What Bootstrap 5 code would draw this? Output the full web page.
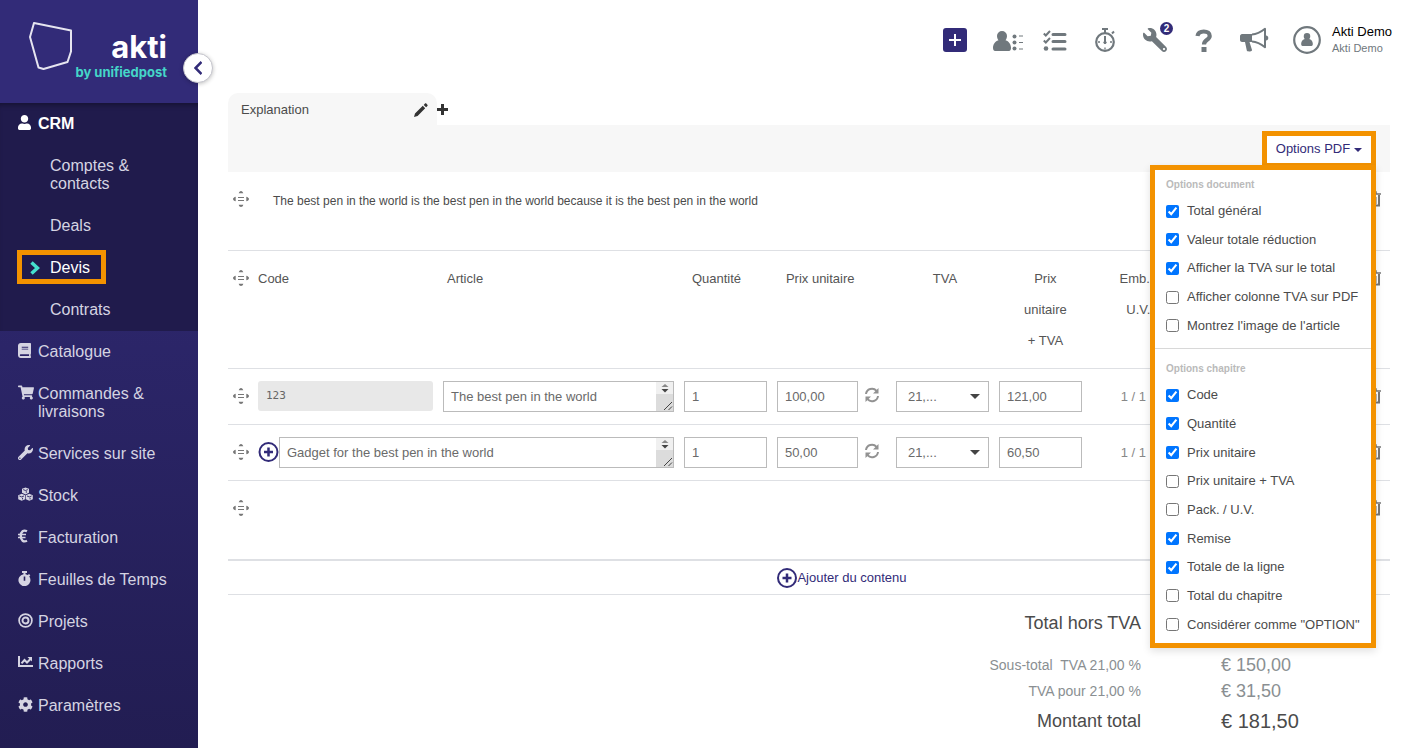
<!DOCTYPE html>
<html lang="fr">
<head>
<meta charset="utf-8">
<meta name="viewport" content="width=device-width, initial-scale=1">
<title>Akti – Devis</title>
<link href="https://cdn.jsdelivr.net/npm/bootstrap@5.3.0/dist/css/bootstrap.min.css" rel="stylesheet">
<style>
  :root { --brand: #322b78; --mark: #f39200; --ink: #4b4b4b; --line: #dee0e4; --icon: #70787d; }
  body { font-family: "Liberation Sans", Arial, sans-serif; font-size: 13px; line-height: 18px; color: var(--ink); background: #fff; }
  a { text-decoration: none; }
  svg { display: block; flex: none; }

  /* Sidebar */
  .sidebar { width: 198px; background: linear-gradient(#332c7b, #221d52); }
  .brand { height: 103px; background: #322b78; padding: 22px 31px 0 28px; }
  .brand-name { font: 700 31px/36px Inter, sans-serif; color: #fff; padding-top: 7px; }
  .brand-sub { font: 700 13px/14px Inter, sans-serif; color: #45d6c8; }
  .brand-text { margin-left: -26px; }
  .collapse-btn { top: 53px; right: -15px; width: 30px; height: 30px; border: 1px solid #c4c4cc; background: #fff; color: var(--brand); z-index: 5; box-shadow: 0 1px 4px rgba(0,0,0,.25); }
  .menu { font-size: 16px; line-height: 18px; }
  .menu a { color: #d5d4e2; display: flex; }
  .menu-main { padding: 12px 24px 12px 18px; }
  .menu-icon { width: 20px; flex: none; }
  .menu-sub { padding: 12px 40px 12px 50px; }
  .menu-open { background: #201b4c; box-shadow: inset 0 5px 5px -3px rgba(0,0,0,.35); }
  .menu .menu-active { color: #fff; }
  .marked-item { padding: 3px 17px 5px; }
  .marked-item a { width: 89px; height: 34px; border: 5px solid var(--mark); padding: 1px 0 0 8px; gap: 10px; align-items: center; }

  /* Header */
  .topbar { height: 93px; padding: 0 10px 14px 0; }
  .topbar a { color: var(--icon); }
  .topbar .add-btn { width: 24px; height: 24px; border-radius: 3px; background: var(--brand); color: #fff; margin-right: 26px; }
  .count { top: -6px; left: 17px; width: 13px; height: 13px; font-size: 10px; line-height: 13px; background: var(--brand); }
  .account { gap: 11px; }
  .user-name { color: #000; line-height: 17px; }
  .user-org { font-size: 11px; line-height: 16px; color: var(--icon); }

  /* Chapter */
  .content { padding: 0 12px 0 30px; }
  .tab { width: 209px; height: 32px; background: #f7f7f7; border-radius: 10px 10px 0 0; padding: 2px 9px 0 13px; }
  .icon-btn { border: 0; background: none; padding: 0; color: inherit; }
  .chapter-bar { height: 47px; background: #f7f7f7; }
  .pdf-options { top: 6px; right: 14px; z-index: 4; }
  .pdf-btn { width: 114px; height: 37px; background: #fff; border: 5px solid var(--mark); border-radius: 0; padding: 0 0 2px; font-size: 13px; color: var(--brand); }
  .pdf-btn::after { margin-left: 4px; vertical-align: 1px; border-top-width: 4px; border-left-width: 4px; border-right-width: 4px; }
  .pdf-menu { top: 34px; right: 0; width: 226px; border: 5px solid var(--mark); border-radius: 0; padding: 6px 0 4px; font-size: 13px; color: var(--ink); box-shadow: 0 3px 8px rgba(0,0,0,.12); }
  .pdf-menu h6 { font-size: 10px; line-height: 18px; font-weight: 700; color: #bababa; margin: 0; padding: 0 11px; }
  .pdf-menu ul { display: grid; grid-auto-rows: 1fr; padding: 0 11px; margin: 3px 0 0; list-style: none; }
  .list-document { height: 143px; }
  .list-chapter { height: 258px; }
  .pdf-menu label { display: flex; align-items: center; gap: 8px; height: 100%; white-space: nowrap; }
  .pdf-menu input { margin: 0; width: 13px; height: 13px; }
  .pdf-menu hr { margin: 8px 0 11px; border-color: #d8d8d8; opacity: 1; }

  /* Quote lines */
  .lines { table-layout: fixed; width: 100%; border-collapse: collapse; }
  .lines tr { border-bottom: 1px solid var(--line); }
  .lines td, .lines th { padding: 12px 10px 12px 0; vertical-align: top; font-weight: 400; }
  .lines .col-drag { padding: 19px 0 0 5px; color: #777; }
  .lines .col-trash { padding: 19px 0 0 6px; color: #777; }
  .row-text { height: 78px; }
  .lines .row-text .row-note { padding: 20px 0 0 15px; font-size: 12px; }
  .row-head { height: 118px; }
  .lines .row-head th { line-height: 31px; color: #555; }
  .row-head .head-price { padding-left: 9px; }
  .row-head .head-vat { padding-right: 5px; }
  .row-line { height: 56px; }
  .row-blank { height: 80px; }
  .lines .row-blank { border-bottom: 2px solid var(--line); }
  .field { width: 100%; height: 31px; border: 1px solid #bbb; border-radius: 0; padding: 0 7px; font-size: 13px; line-height: 29px; color: #6a6a6a; background-color: #fff; }
  .field-code { height: 30px; border: 0; border-radius: 3px; background: #e8e8e8; padding: 0 8px; font-family: "DejaVu Sans Mono", monospace; font-size: 11px; color: #666; }
  .field-area { border: 1px solid #bbb; height: 31px; }
  .field-area textarea { border: 0; height: 29px; resize: none; overflow: hidden; min-width: 0; outline: 0; }
  .price-group { gap: 6px; }
  .price-group button { padding-bottom: 2px; }
  .field-price { width: 81px; }
  .field-vat { padding: 0 24px 0 11px; appearance: none; background: #fff url("data:image/svg+xml,%3Csvg xmlns='http://www.w3.org/2000/svg' width='10' height='5'%3E%3Cpath d='M0 0h10L5 5z' fill='%23444'/%3E%3C/svg%3E") no-repeat right 8px center; }
  .add-row { height: 34px; border-bottom: 1px solid var(--line); padding-left: 66px; }
  .add-row button { color: var(--brand); }
  .lines .unit { line-height: 31px; color: #888; }

  /* Totals */
  .totals { margin-top: 11px; width: 600px; color: #8a8f92; }
  .totals td, .totals th { font-weight: 400; padding: 0; text-align: right; font-size: 14px; line-height: 26px; }
  .totals td { width: 249px; text-align: left; padding-left: 80px; font-size: 18px; }
  .totals .total-main th, .totals .total-main td { color: var(--ink); font-size: 18px; line-height: 34px; }
  .totals .total-last td { font-size: 20px; }
  .totals .total-first th { padding-bottom: 12px; }
</style>
</head>
<body>
<svg width="0" height="0" class="position-absolute" aria-hidden="true">
  <symbol id="i-drag" viewBox="0 0 16 16"><path d="M8 0c1 0 2 1 2.300 2.300H5.700C6 1 7 0 8 0zM8 16c1 0 2-1 2.300-2.300H5.700C6 15 7 16 8 16zM0 8c0-1 1.300-2 2.700-2.300v4.600C1.300 10 0 9 0 8zM16 8c0-1-1.300-2-2.700-2.300v4.600C14.700 10 16 9 16 8z" fill="currentColor"/><path d="M5 6.500h6M5 9.500h6" stroke="currentColor"/></symbol>
  <symbol id="i-trash" viewBox="0 0 15 16"><path d="M0 3h15M5 2.500V1h5v1.500" fill="none" stroke="currentColor" stroke-width="1.500"/><path d="M2.500 4v10.500h10.500V4M6 6v7M9.500 6v7" fill="none" stroke="currentColor" stroke-width="2"/></symbol>
  <symbol id="i-sync" viewBox="0 0 16 16"><path d="M2 7a6 6 0 0 1 10.500-3.200M14 9a6 6 0 0 1-10.500 3.200" fill="none" stroke="currentColor" stroke-width="2"/><path d="M14.500 1v5.500H9zM1.500 15V9.500H7z" fill="currentColor"/></symbol>
  <symbol id="i-circle-plus" viewBox="0 0 20 20"><circle cx="10" cy="10" r="9" fill="none" stroke="currentColor" stroke-width="2"/><path d="M10 5.500v9M5.500 10h9" stroke="currentColor" stroke-width="2.500"/></symbol>
  <symbol id="i-scroll" viewBox="0 0 17 29"><path fill="#f0f0f0" d="M0 0h17v12H0z"/><path fill="#dcdcdc" d="M0 12h17v17H0z"/><path d="M9 2l3.500 3h-7z" fill="#888"/><path d="M5.500 7h7L9 10.500z" fill="#444"/><path d="M8 28l8-8M12.500 28l3.500-3.500" stroke="#444"/></symbol>
  <symbol id="i-person" viewBox="0 0 18 20"><path d="M9 0a5 5 0 0 1 5 5c0 2-.8 3.300-1.500 4.300C16.500 10.500 18 14 18 17c0 2-1 3-2 3H2c-1 0-2-1-2-3 0-3 1.500-6.500 5.500-7.700C4.800 8.300 4 7 4 5a5 5 0 0 1 5-5z" fill="currentColor"/></symbol>
  <symbol id="i-wrench" viewBox="0 0 512 512"><path fill="currentColor" d="M507.730 109.100c-2.240-9.030-13.540-12.090-20.120-5.510l-74.360 74.360-67.880-11.310-11.310-67.880 74.360-74.360c6.620-6.620 3.430-17.900-5.660-20.160-47.380-11.740-99.550.91-136.580 37.930-39.640 39.640-50.550 97.100-34.050 147.200L18.740 402.760c-24.990 24.990-24.990 65.510 0 90.500 24.990 24.990 65.510 24.990 90.500 0l213.210-213.210c50.120 16.710 107.470 5.680 147.370-34.220 37.070-37.070 49.700-89.320 37.910-136.730zM64 472c-13.250 0-24-10.750-24-24 0-13.260 10.750-24 24-24s24 10.740 24 24c0 13.250-10.750 24-24 24z"/></symbol>
</svg>

<div class="d-flex min-vh-100">
  <aside class="sidebar position-relative flex-shrink-0">
    <a class="brand d-flex" href="#">
      <svg width="44" height="48" viewBox="0 0 44 48" fill="none" stroke="#e6e5f0" stroke-width="2" stroke-linejoin="round"><path d="M6 1l37 7.500v21l-3.500 10.500-24 7-5-1.500L2 15z"/></svg>
      <span class="brand-text d-flex flex-column align-items-end flex-grow-1"><span class="brand-name">akti</span><span class="brand-sub text-nowrap">by unifiedpost</span></span>
    </a>
    <button class="collapse-btn position-absolute rounded-circle p-0 d-flex align-items-center justify-content-center" aria-label="Réduire le menu">
      <svg width="8" height="14" viewBox="0 0 8 14" fill="none" stroke="currentColor" stroke-width="2.500"><path d="M7.500 1L1.500 7l6 6"/></svg>
    </button>
    <nav class="menu">
      <div class="menu-open">
        <a class="menu-main menu-active fw-bold" href="#"><span class="menu-icon"><svg width="13" height="15" viewBox="0 0 448 512"><path fill="currentColor" d="M224 256c70.700 0 128-57.300 128-128S294.700 0 224 0 96 57.300 96 128s57.300 128 128 128zm89.600 32h-16.700c-22.200 10.200-46.900 16-72.900 16s-50.600-5.800-72.900-16h-16.700C60.200 288 0 348.200 0 422.400V464c0 26.500 21.500 48 48 48h352c26.500 0 48-21.500 48-48v-41.600c0-74.200-60.200-134.400-134.400-134.400z"/></svg></span>CRM</a>
        <a class="menu-sub" href="#">Comptes &amp; contacts</a>
        <a class="menu-sub" href="#">Deals</a>
        <div class="marked-item"><a class="menu-active" href="#"><svg width="10" height="14" viewBox="0 0 10 14" fill="none" stroke="#45e0cf" stroke-width="3.500"><path d="M1.500 1.500L7.500 7l-6 5.500"/></svg>Devis</a></div>
        <a class="menu-sub" href="#">Contrats</a>
      </div>
      <a class="menu-main" href="#"><span class="menu-icon"><svg width="13" height="15" viewBox="0 0 448 512"><path fill="currentColor" d="M448 360V24c0-13.300-10.700-24-24-24H96C43 0 0 43 0 96v320c0 53 43 96 96 96h328c13.300 0 24-10.700 24-24v-16c0-7.500-3.500-14.300-8.900-18.700-4.200-15.400-4.200-59.300 0-74.700 5.400-4.300 8.900-11.100 8.900-18.600zM128 134c0-3.300 2.700-6 6-6h212c3.300 0 6 2.700 6 6v20c0 3.300-2.700 6-6 6H134c-3.300 0-6-2.700-6-6v-20zm0 64c0-3.300 2.700-6 6-6h212c3.300 0 6 2.700 6 6v20c0 3.300-2.700 6-6 6H134c-3.300 0-6-2.700-6-6v-20zm253.400 250H96c-17.700 0-32-14.300-32-32 0-17.600 14.400-32 32-32h285.400c-1.900 17.100-1.900 46.900 0 64z"/></svg></span>Catalogue</a>
      <a class="menu-main" href="#"><span class="menu-icon"><svg width="16" height="15" viewBox="0 0 576 512"><path fill="currentColor" d="M528.120 301.319l47.273-208C578.806 78.301 567.391 64 551.990 64H159.208l-9.166-44.810C147.758 8.021 137.930 0 126.529 0H24C10.745 0 0 10.745 0 24v16c0 13.255 10.745 24 24 24h69.883l70.248 343.435C147.325 417.100 136 435.222 136 456c0 30.928 25.072 56 56 56s56-25.072 56-56c0-15.674-6.447-29.835-16.824-40h209.647C430.447 426.165 424 440.326 424 456c0 30.928 25.072 56 56 56s56-25.072 56-56c0-22.172-12.888-41.332-31.579-50.405l5.517-24.276c3.413-15.018-8.002-29.319-23.403-29.319H218.117l-6.545-32h293.145c11.206 0 20.920-7.754 23.403-18.681z"/></svg></span>Commandes &amp; livraisons</a>
      <a class="menu-main" href="#"><span class="menu-icon"><svg width="15" height="15"><use href="#i-wrench"/></svg></span>Services sur site</a>
      <a class="menu-main" href="#"><span class="menu-icon"><svg width="15" height="15" viewBox="0 0 15 15"><g fill="currentColor"><path d="M7.500 .5l3.500 1.300v4L7.500 7.400 4 5.800V1.800z"/><path d="M3.700 6.800l3.500 1.400v4l-3.500 1.500L.2 12.200V8.200z"/><path d="M11.300 6.800l3.500 1.400v4l-3.500 1.500-3.500-1.500V8.200z"/></g><path d="M5.200 2.600l2.300.9 2.300-.9M8.300 4.200v1.600M1.400 9l2.300.9L6 9M4.500 10.800v1.600M9 9l2.300.9 2.300-.9M12.100 10.800v1.600" fill="none" stroke="#2a245f" stroke-width=".9"/></svg></span>Stock</a>
      <a class="menu-main" href="#"><span class="menu-icon"><svg width="10" height="14" viewBox="0 0 10 14" fill="none" stroke="currentColor"><path d="M9 2.300C5.500.5 2.800 2.500 2.800 7S5.500 13.500 9 11.700" stroke-width="2.300"/><path d="M0 5.600h8M0 8.400h7.500" stroke-width="1.500"/></svg></span>Facturation</a>
      <a class="menu-main" href="#"><span class="menu-icon"><svg width="13" height="15" viewBox="0 0 13 15"><path fill="currentColor" fill-rule="evenodd" d="M4 0h5v2H7.500v1.200l2.300.9L11 3l1.300 1.300-1 1.300A6 6 0 1 1 5.500 3.200V2H4zM5.700 5.500v4.300h1.600V5.500z"/></svg></span>Feuilles de Temps</a>
      <a class="menu-main" href="#"><span class="menu-icon"><svg width="15" height="15" viewBox="0 0 15 15" fill="none" stroke="currentColor"><circle cx="7.500" cy="7.500" r="6.400" stroke-width="1.700"/><circle cx="7.500" cy="7.500" r="3" stroke-width="1.900"/></svg></span>Projets</a>
      <a class="menu-main" href="#"><span class="menu-icon"><svg width="15" height="14" viewBox="0 0 15 14"><path d="M1 1v10h14" fill="none" stroke="currentColor" stroke-width="2"/><path d="M3.500 8.300L6.500 5 9 7.500 12.500 4" fill="none" stroke="currentColor" stroke-width="2"/><path d="M9.500 2H14v4.500z" fill="currentColor"/></svg></span>Rapports</a>
      <a class="menu-main" href="#"><span class="menu-icon"><svg width="15" height="15" viewBox="0 0 512 512"><path fill="currentColor" d="M487.400 315.700l-42.600-24.600c4.300-23.200 4.300-47 0-70.200l42.600-24.600c4.900-2.800 7.100-8.600 5.500-14-11.100-35.600-30-67.800-54.700-94.600-3.800-4.100-10-5.100-14.800-2.300L380.800 110c-17.900-15.400-38.500-27.300-60.800-35.100V25.800c0-5.600-3.900-10.500-9.400-11.700-36.700-8.200-74.300-7.800-109.200 0-5.500 1.200-9.400 6.100-9.400 11.700V75c-22.200 7.900-42.800 19.800-60.800 35.100L88.700 85.500c-4.900-2.800-11-1.900-14.800 2.300-24.700 26.700-43.600 58.900-54.700 94.600-1.700 5.400.6 11.200 5.500 14L67.300 221c-4.300 23.200-4.300 47 0 70.200l-42.600 24.600c-4.900 2.800-7.100 8.600-5.500 14 11.100 35.600 30 67.800 54.700 94.600 3.800 4.100 10 5.100 14.800 2.300l42.600-24.600c17.900 15.400 38.500 27.300 60.800 35.100v49.200c0 5.600 3.900 10.500 9.400 11.700 36.700 8.200 74.300 7.800 109.200 0 5.500-1.200 9.400-6.100 9.400-11.700v-49.200c22.200-7.900 42.800-19.800 60.800-35.100l42.600 24.600c4.900 2.800 11 1.900 14.800-2.300 24.700-26.700 43.600-58.900 54.700-94.600 1.500-5.500-.7-11.300-5.600-14.100zM256 336c-44.100 0-80-35.900-80-80s35.900-80 80-80 80 35.900 80 80-35.900 80-80 80z"/></svg></span>Paramètres</a>
    </nav>
  </aside>

  <div class="flex-grow-1">
    <header class="topbar d-flex align-items-center justify-content-end">
      <button class="add-btn icon-btn d-flex align-items-center justify-content-center" aria-label="Ajouter"><svg width="12" height="12" viewBox="0 0 12 12" stroke="currentColor" stroke-width="2"><path d="M6 0v12M0 6h12"/></svg></button>
      <nav class="d-flex align-items-center" aria-label="Raccourcis">
        <a href="#" class="me-3 pe-1" aria-label="Contacts"><svg width="30" height="22" viewBox="0 0 30 22"><use href="#i-person" width="18" height="20" y="2"/><g fill="currentColor"><circle cx="21.500" cy="7.500" r="2"/><circle cx="21.500" cy="13.500" r="2"/><circle cx="21.500" cy="19.500" r="2"/></g><path d="M26 7h4M26 13.500h4M26 20h4" stroke="currentColor"/></svg></a>
        <a href="#" class="me-4 pe-1" aria-label="Tâches"><svg width="24" height="22" viewBox="0 0 24 22"><path d="M10 5.500h12M10 12.500h12M10 20h12" stroke="currentColor" stroke-width="3" stroke-linecap="round"/><path d="M.8 4.500l2 2L7 2M.8 11.500l2 2L7 9" fill="none" stroke="currentColor" stroke-width="2"/><circle cx="3" cy="19.500" r="2.300" fill="currentColor"/></svg></a>
        <a href="#" class="me-4 pe-1" aria-label="Chronomètre"><svg width="20" height="24" viewBox="0 0 20 24" fill="none" stroke="currentColor"><circle cx="10" cy="14" r="8.800" stroke-width="2.200"/><path d="M7 1h6M17 5.500l2-2" stroke-width="2"/><path d="M10 1v4M10 8v6" stroke-width="2"/><path d="M10 19.500v2M3 14h2M15 14h2" stroke-width="1.300"/><circle cx="10" cy="14.500" r="1.200" fill="currentColor"/></svg></a>
        <a href="#" class="position-relative me-4 pe-1" aria-label="Outils"><svg width="24" height="24" viewBox="0 0 24 24"><use href="#i-wrench" width="24" height="24" transform="matrix(-1 0 0 1 24 0)"/></svg><span class="count position-absolute rounded-circle text-white fw-bold text-center">2</span></a>
        <a href="#" class="me-4 pe-1" aria-label="Aide"><svg width="17" height="24" viewBox="0 0 17 24"><path d="M2.500 8C3 5 5.500 3.500 8.800 3.500c3.700 0 5.900 1.800 5.900 4.500 0 4-5.700 3.600-5.700 8.500" fill="none" stroke="currentColor" stroke-width="4.200"/><path d="M6.500 19h5v5h-5z" fill="currentColor"/></svg></a>
        <a href="#" class="me-4" aria-label="Annonces"><svg width="29" height="25" viewBox="0 0 29 25"><path d="M2 7h10v8H9.500l2.500 8c.4 1.300-4.500 2.200-5.200.6L5 15H2c-1 0-2-1-2-2V9c0-1 1-2 2-2z" fill="currentColor"/><path d="M12 7.500C17 7.300 21 5 25 1.800v18.400C21 17 17 14.800 12 14.500" fill="none" stroke="currentColor" stroke-width="2" stroke-linejoin="round"/><path d="M26 8.500c3 0 3 5 0 5z" fill="currentColor"/></svg></a>
      </nav>
      <a href="#" class="account d-flex align-items-center">
        <svg width="28" height="28" viewBox="0 0 28 28"><circle cx="14" cy="14" r="12.800" fill="none" stroke="currentColor" stroke-width="2.200"/><use href="#i-person" x="8" y="7" width="12" height="13"/></svg>
        <span class="d-flex flex-column"><span class="user-name">Akti Demo</span><span class="user-org">Akti Demo</span></span>
      </a>
    </header>

    <main class="content">
      <div class="d-flex align-items-center">
        <div class="tab d-flex align-items-center justify-content-between">Explanation
          <button class="icon-btn" aria-label="Modifier le titre"><svg width="14" height="14" viewBox="0 0 14 14" fill="#333"><path d="M0 14l1-3.600L8.800 2.800l2.400 2.400L3.600 13zM9.700 1.900l1.300-1.300c.4-.4.900-.4 1.300 0l1.100 1.100c.4.400.4.900 0 1.300l-1.300 1.300z"/></svg></button>
        </div>
        <button class="icon-btn" aria-label="Ajouter un chapitre"><svg width="11" height="11" viewBox="0 0 11 11" stroke="#333" stroke-width="3"><path d="M5.500 0v11M0 5.500h11"/></svg></button>
      </div>

      <div class="chapter-bar position-relative">
        <div class="pdf-options position-absolute">
          <button class="pdf-btn dropdown-toggle d-block" aria-expanded="true">Options PDF</button>
          <div class="pdf-menu dropdown-menu show">
            <h6>Options document</h6>
            <ul class="list-document">
              <li><label><input type="checkbox" checked>Total général</label></li>
              <li><label><input type="checkbox" checked>Valeur totale réduction</label></li>
              <li><label><input type="checkbox" checked>Afficher la TVA sur le total</label></li>
              <li><label><input type="checkbox">Afficher colonne TVA sur PDF</label></li>
              <li><label><input type="checkbox">Montrez l'image de l'article</label></li>
            </ul>
            <hr>
            <h6>Options chapitre</h6>
            <ul class="list-chapter">
              <li><label><input type="checkbox" checked>Code</label></li>
              <li><label><input type="checkbox" checked>Quantité</label></li>
              <li><label><input type="checkbox" checked>Prix unitaire</label></li>
              <li><label><input type="checkbox">Prix unitaire + TVA</label></li>
              <li><label><input type="checkbox">Pack. / U.V.</label></li>
              <li><label><input type="checkbox" checked>Remise</label></li>
              <li><label><input type="checkbox" checked>Totale de la ligne</label></li>
              <li><label><input type="checkbox">Total du chapitre</label></li>
              <li><label><input type="checkbox">Considérer comme "OPTION"</label></li>
            </ul>
          </div>
        </div>
      </div>

      <table class="lines">
        <colgroup>
          <col style="width:30px"><col style="width:185px"><col><col style="width:93px"><col style="width:119px"><col style="width:103px"><col style="width:93px"><col style="width:93px"><col style="width:175px"><col style="width:30px">
        </colgroup>
        <tbody>
          <tr class="row-text">
            <td class="col-drag"><svg width="16" height="16"><use href="#i-drag"/></svg></td>
            <td colspan="8" class="row-note">The best pen in the world is the best pen in the world because it is the best pen in the world</td>
            <td class="col-trash"><button class="icon-btn" aria-label="Supprimer"><svg width="15" height="16"><use href="#i-trash"/></svg></button></td>
          </tr>
          <tr class="row-head">
            <td class="col-drag"><svg width="16" height="16"><use href="#i-drag"/></svg></td>
            <th>Code</th>
            <th class="ps-1">Article</th>
            <th class="ps-2">Quantité</th>
            <th class="head-price">Prix unitaire</th>
            <th class="head-vat text-center">TVA</th>
            <th class="text-center px-3">Prix unitaire +&nbsp;TVA</th>
            <th class="text-center px-4">Emb.&nbsp;/ U.V.</th>
            <th></th>
            <td class="col-trash"><button class="icon-btn" aria-label="Supprimer"><svg width="15" height="16"><use href="#i-trash"/></svg></button></td>
          </tr>
          <tr class="row-line">
            <td class="col-drag"><svg width="16" height="16"><use href="#i-drag"/></svg></td>
            <td><input class="field field-code" value="123" aria-label="Code" readonly></td>
            <td><div class="field-area d-flex"><textarea class="field flex-grow-1" rows="1" aria-label="Article">The best pen in the world</textarea><svg width="17" height="29"><use href="#i-scroll"/></svg></div></td>
            <td><input class="field" value="1" aria-label="Quantité"></td>
            <td><div class="price-group d-flex"><input class="field field-price" value="100,00" aria-label="Prix unitaire"><button class="icon-btn" aria-label="Recalculer"><svg width="16" height="16" color="#929292"><use href="#i-sync"/></svg></button></div></td>
            <td><select class="field field-vat" aria-label="TVA"><option>21,...</option></select></td>
            <td><input class="field" value="121,00" aria-label="Prix unitaire + TVA"></td>
            <td class="unit text-center">1 / 1</td>
            <td></td>
            <td class="col-trash"><button class="icon-btn" aria-label="Supprimer"><svg width="15" height="16"><use href="#i-trash"/></svg></button></td>
          </tr>
          <tr class="row-line">
            <td class="col-drag"><svg width="16" height="16"><use href="#i-drag"/></svg></td>
            <td colspan="2"><div class="d-flex align-items-center"><button class="icon-btn" aria-label="Lier un article"><svg width="21" height="20" color="#322b78"><use href="#i-circle-plus"/></svg></button><div class="field-area d-flex flex-grow-1"><textarea class="field flex-grow-1" rows="1" aria-label="Article">Gadget for the best pen in the world</textarea><svg width="17" height="29"><use href="#i-scroll"/></svg></div></div></td>
            <td><input class="field" value="1" aria-label="Quantité"></td>
            <td><div class="price-group d-flex"><input class="field field-price" value="50,00" aria-label="Prix unitaire"><button class="icon-btn" aria-label="Recalculer"><svg width="16" height="16" color="#929292"><use href="#i-sync"/></svg></button></div></td>
            <td><select class="field field-vat" aria-label="TVA"><option>21,...</option></select></td>
            <td><input class="field" value="60,50" aria-label="Prix unitaire + TVA"></td>
            <td class="unit text-center">1 / 1</td>
            <td></td>
            <td class="col-trash"><button class="icon-btn" aria-label="Supprimer"><svg width="15" height="16"><use href="#i-trash"/></svg></button></td>
          </tr>
          <tr class="row-blank">
            <td class="col-drag"><svg width="16" height="16"><use href="#i-drag"/></svg></td>
            <td colspan="8"></td>
            <td class="col-trash"><button class="icon-btn" aria-label="Supprimer"><svg width="15" height="16"><use href="#i-trash"/></svg></button></td>
          </tr>
        </tbody>
      </table>

      <div class="add-row d-flex align-items-center justify-content-center">
        <button class="icon-btn d-flex align-items-center"><svg width="20" height="20"><use href="#i-circle-plus"/></svg>Ajouter du contenu</button>
      </div>

      <table class="totals ms-auto">
        <tbody>
          <tr class="total-main total-first"><th scope="row">Total hors TVA</th><td></td></tr>
          <tr><th scope="row">Sous-total &nbsp;TVA 21,00 %</th><td>€ 150,00</td></tr>
          <tr><th scope="row">TVA pour 21,00 %</th><td>€ 31,50</td></tr>
          <tr class="total-main total-last"><th scope="row">Montant total</th><td>€ 181,50</td></tr>
        </tbody>
      </table>
    </main>
  </div>
</div>
<script src="https://cdn.jsdelivr.net/npm/bootstrap@5.3.0/dist/js/bootstrap.bundle.min.js"></script>
</body>
</html>
